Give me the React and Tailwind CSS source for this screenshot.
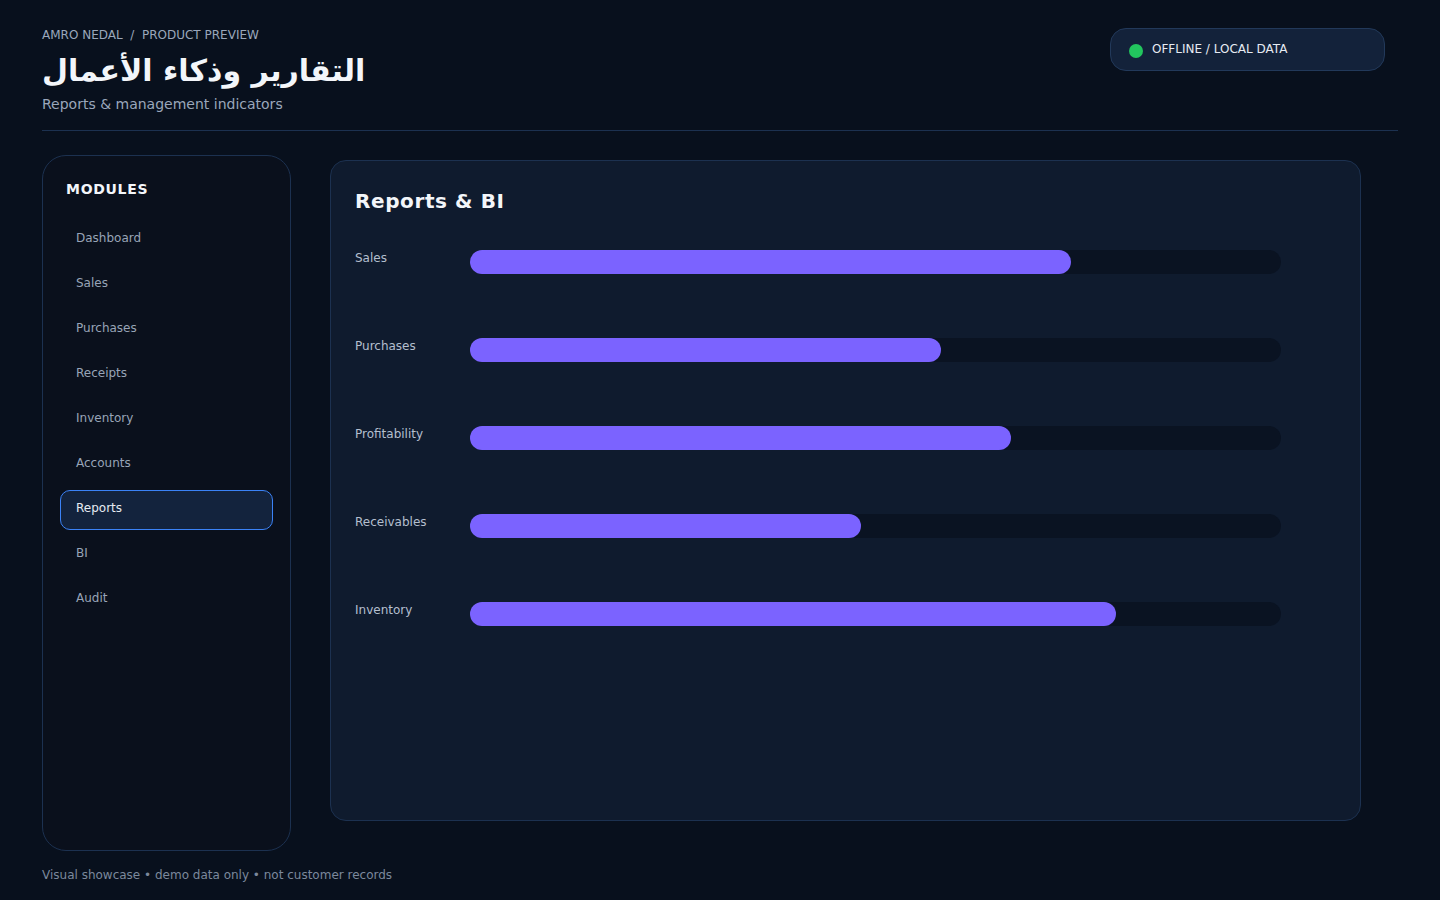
import React from 'react';

const modules = ['Dashboard', 'Sales', 'Purchases', 'Receipts', 'Inventory', 'Accounts', 'Reports', 'BI', 'Audit'];

const bars = [
  { label: 'Sales', value: 74.1 },
  { label: 'Purchases', value: 58.1 },
  { label: 'Profitability', value: 66.7 },
  { label: 'Receivables', value: 48.2 },
  { label: 'Inventory', value: 79.7 },
];

const App = () => {
  return (
    <div className="min-h-screen bg-[#08101d] text-white px-[42px] pt-[27px] pb-6" style={{ fontFamily: '"DejaVu Sans", Verdana, sans-serif' }}>
      {/* Header */}
      <div className="flex items-start justify-between border-b border-[#1c3150] pb-4">
        <div>
          <div className="text-xs leading-4 text-[#9aa7bb] uppercase">Amro Nedal&nbsp; /&nbsp; Product Preview</div>
          <h1 className="mt-[10px] text-[30px] leading-[36px] font-bold text-[#f3f6fa]">التقارير وذكاء الأعمال</h1>
          <p className="mt-[5px] text-sm leading-5 text-[#9aa7bb]">Reports &amp; management indicators</p>
        </div>
        <div className="mt-[1px] mr-[13px] flex h-[43px] w-[275px] items-center gap-[9px] rounded-[16px] border border-[#22395a] bg-[#13223a] pl-[18px]">
          <span className="mt-[3px] h-[14px] w-[14px] rounded-full bg-[#22c55e]"></span>
          <span className="pb-[2px] text-xs text-[#e6ebf2]">OFFLINE / LOCAL DATA</span>
        </div>
      </div>

      {/* Body */}
      <div className="mt-6 flex items-start gap-[39px]">
        <aside className="h-[696px] w-[249px] shrink-0 rounded-[24px] border border-[#1c3150] bg-[#0a101c] px-[17px] pt-[23px]">
          <div className="ml-[6px] mb-[21px] text-sm leading-5 font-bold tracking-wider text-[#f3f6fa]">MODULES</div>
          <div className="flex flex-col gap-[5px]">
            {modules.map((m) => (
              <div
                key={m}
                className={
                  m === 'Reports'
                    ? 'flex h-10 items-center rounded-[10px] border border-[#3b82f6] bg-[#13233d] px-[15px] pb-[4px] text-xs text-[#e6ebf2]'
                    : 'flex h-10 items-center rounded-[10px] border border-transparent px-[15px] pb-[4px] text-xs text-[#98a4b7]'
                }
              >
                {m}
              </div>
            ))}
          </div>
        </aside>

        <main className="mt-[5px] h-[661px] w-[1031px] rounded-[16px] border border-[#1c3150] bg-[#0f1b2e] px-6 pt-[26px]">
          <h2 className="text-xl leading-7 font-bold tracking-[0.6px] text-[#f3f6fa]">Reports &amp; BI</h2>
          <div className="mt-[35px] flex flex-col gap-16">
            {bars.map((b) => (
              <div key={b.label} className="flex h-6 items-start">
                <div className="w-[115px] shrink-0 pt-[1px] text-xs leading-[14px] text-[#b4bfce]">{b.label}</div>
                <div className="h-6 w-[811px] rounded-full bg-[#0a1322]">
                  <div className="h-full rounded-full bg-[#7b63ff]" style={{ width: `${b.value}%` }}></div>
                </div>
              </div>
            ))}
          </div>
        </main>
      </div>

      <div className="mt-[16px] text-xs leading-4 text-[#7b889c]">Visual showcase • demo data only • not customer records</div>
    </div>
  );
};

export default App;
